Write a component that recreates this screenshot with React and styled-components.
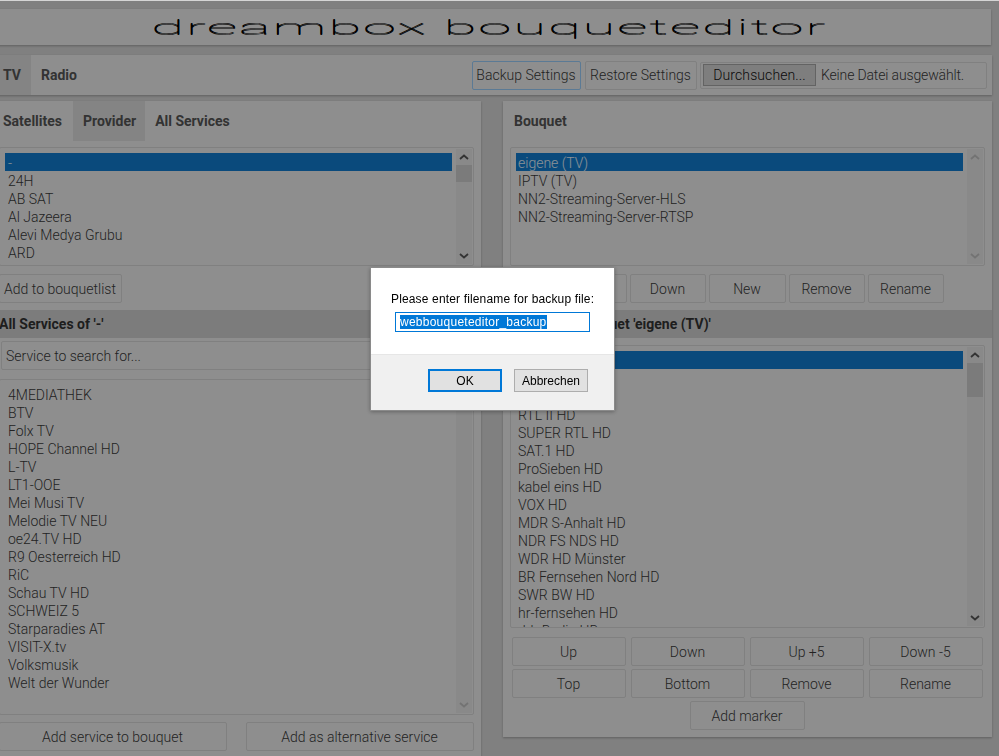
import React from "react";
import styled, { createGlobalStyle } from "styled-components";

const Global = createGlobalStyle`
  html, body { margin: 0; height: 756px; overflow: hidden; background: #d5d5d5; }
  * { box-sizing: border-box; }
  body { font-family: Roboto, "Liberation Sans", sans-serif; font-size: 14px; color: #3a3a3a; }
`;
const Page = styled.div`
  width: 1000px;
  margin-left: -8px;
  padding-top: 9px;
`;
const TitleBar = styled.header`
  height: 36px;
  width: 999px;
  background: #ededed;
  box-shadow: 0 1px 2px rgba(0,0,0,.25);
  display: flex;
  align-items: center;
  justify-content: center;
  overflow: hidden;
`;
const Title = styled.h1`
  margin: 0 0 0 -6px;
  font: 100 21px/1 Roboto, sans-serif;
  color: #000;
  white-space: nowrap;
  letter-spacing: .5px;
  text-shadow: 0 .7px 0 #000;
  transform: scale(2.89, 1);
`;
const Nav = styled.nav`
  margin-top: 10px;
  height: 40px;
  background: #ededed;
  box-shadow: 0 1px 2px rgba(0,0,0,.25);
  display: flex;
  align-items: stretch;
  padding-right: 5px;
`;
const Tab = styled.div`
  display: flex;
  align-items: center;
  padding: 0 ${p => p.$pr ?? 10}px 0 ${p => p.$pl ?? 10}px;
  font-weight: 700;
  color: #555;
  background: ${p => (p.$active ? "#dddddd" : "transparent")};
`;
const Actions = styled.div`
  margin-left: auto;
  display: flex;
  align-items: center;
  gap: 3px;
`;
const Btn = styled.button`
  height: ${p => p.$h || 29}px;
  width: ${p => (p.$w ? p.$w + "px" : "auto")};
  flex: ${p => (p.$grow ? "1" : "none")};
  margin-right: ${p => p.$mr || 0}px;
  padding: 0 1px 0 0;
  border: 1px solid ${p => (p.$focus ? "#98ccf8" : "#d6d6d6")};
  border-radius: 2px;
  background: #ededed;
  font: 300 14px Roboto, sans-serif;
  color: #3a3a3a;
`;
const FileBox = styled.div`
  width: 287px;
  height: 27px;
  border: 1px solid #d6d6d6;
  border-radius: 2px;
  display: flex;
  align-items: center;
  padding-left: 2px;
  gap: 5px;
  font-weight: 300;
  letter-spacing: -.15px;
  color: #3a3a3a;
`;
const FileBtn = styled.span`
  width: 113px;
  height: 22px;
  border: 1px solid #a6a6a6;
  background: #d2d2d2;
  display: flex;
  align-items: center;
  justify-content: center;
  color: #111;
  font-weight: 300;
  letter-spacing: .1px;
`;
const Columns = styled.main`
  margin-top: 6px;
  display: grid;
  grid-template-columns: 489px 489px;
  column-gap: 22px;
  align-items: start;
`;
const Panel = styled.section`
  background: #ededed;
  box-shadow: 0 1px 2px rgba(0,0,0,.25);
  padding-bottom: 7px;
`;
const PanelHead = styled.div`
  height: 40px;
  display: flex;
  align-items: stretch;
`;
const Heading = styled.div`
  padding: 0 11px;
  display: flex;
  align-items: center;
  font-weight: 700;
  color: #555;
`;
const ListBox = styled.div`
  margin: ${p => p.$mt}px 7px 0;
  height: ${p => p.$h}px;
  border: 1px solid #d6d6d6;
  border-radius: 2px;
  display: flex;
  background: #ededed;
`;
const Rows = styled.div`
  flex: 1;
  min-width: 0;
  padding: 5px 4px 0 5px;
  overflow: hidden;
  font-weight: 300;
  color: #3a3a3a;
`;
const Row = styled.div`
  height: 18px;
  line-height: 20px;
  padding-left: ${p => p.$inset}px;
  white-space: nowrap;
  background: ${p => (p.$sel ? "#127ccf" : "transparent")};
  color: ${p => (p.$sel ? "#e8f2fa" : "inherit")};
`;
const Track = styled.div`
  width: 16px;
  margin: 1px 1px 1px 0;
  background: #e4e4e4;
  display: flex;
  flex-direction: column;
  align-items: stretch;
`;
const Arrow = styled.div`
  height: 16px;
  display: flex;
  align-items: center;
  justify-content: center;
  color: ${p => (p.$faint ? "#c0c0c0" : "#555")};
`;
const Thumb = styled.div`
  height: ${p => p.$h}px;
  background: ${p => (p.$show ? "#cdcdcd" : "transparent")};
`;
const Gap = styled.div`flex: 1;`;
const BtnRow = styled.div`
  display: flex;
  justify-content: ${p => p.$justify || "flex-start"};
  gap: ${p => p.$gap || 0}px;
  margin: ${p => p.$mt || 0}px ${p => p.$side ?? 7}px 0;
`;
const SectionBar = styled.div`
  margin-top: 7px;
  height: 28px;
  padding: 0 7px;
  background: #cfcfcf;
  display: flex;
  align-items: center;
  font-weight: 700;
  color: #333;
  white-space: nowrap;
`;
const Search = styled.input`
  display: block;
  margin: 3px 6px 0 9px;
  width: 474px;
  height: 29px;
  border: 1px solid #d6d6d6;
  border-radius: 2px;
  background: #ededed;
  padding: 0 4px;
  font: 300 14px Roboto, sans-serif;
  &::placeholder { color: #3a3a3a; opacity: 1; }
`;
const Overlay = styled.div`
  position: fixed;
  inset: 1px 0 0 0;
  background: rgba(0,0,0,.4);
`;
const Dialog = styled.div`
  position: fixed;
  left: 370px;
  top: 267px;
  width: 245px;
  height: 144px;
  background: #fff;
  border: 1px solid #8a8a8a;
  box-shadow: 0 1px 4px rgba(0,0,0,.3);
  display: flex;
  flex-direction: column;
  font-family: "Liberation Sans", Arial, sans-serif;
  font-size: 12px;
  color: #000;
`;
const DialogBody = styled.div`
  height: 86px;
  padding: 24px 19px 0 24px;
`;
const Prompt = styled.div`
  white-space: nowrap;
  line-height: 14px;
  margin-left: -4px;
  letter-spacing: .15px;
`;
const PromptField = styled.div`
  margin-top: 6px;
  width: 195px;
  height: 20px;
  border: 1px solid #0078d7;
  padding: 2px 3px 2px 4px;
  line-height: 14px;
`;
const Selected = styled.span`
  background: #0078d7;
  color: #fff;
  display: inline-block;
  letter-spacing: .25px;
`;
const DialogFoot = styled.div`
  flex: 1;
  background: #f0f0f0;
  border-top: 1px solid #e6e6e6;
  display: flex;
  justify-content: flex-end;
  gap: 12px;
  padding: 14px 26px 0 0;
`;
const DialogBtn = styled.button`
  width: 74px;
  height: 23px;
  padding: 0;
  background: #e1e1e1;
  border: ${p => (p.$primary ? "2px solid #0078d7" : "1px solid #adadad")};
  font: 12px "Liberation Sans", Arial, sans-serif;
  color: #000;
`;

const Up = () => (
  <svg width="10" height="6" viewBox="0 0 10 6"><path d="M1 5 5 1.5 9 5" fill="none" stroke="currentColor" strokeWidth="1.8" /></svg>
);
const Down = () => (
  <svg width="10" height="6" viewBox="0 0 10 6"><path d="M1 1 5 4.5 9 1" fill="none" stroke="currentColor" strokeWidth="1.8" /></svg>
);
const Scroll = ({ thumb, faint }) => (
  <Track>
    <Arrow $faint={faint}><Up /></Arrow>
    <Thumb $h={thumb} $show={thumb > 0} />
    <Gap />
    <Arrow $faint={faint}><Down /></Arrow>
  </Track>
);
const List = ({ items, selected = 0, h, mt, thumb, faint, inset = 2 }) => (
  <ListBox $h={h} $mt={mt}>
    <Rows>
      {items.map((t, i) => <Row key={t} $sel={i === selected} $inset={inset}>{t}</Row>)}
    </Rows>
    <Scroll thumb={thumb} faint={faint} />
  </ListBox>
);

const providers = ["-", "24H", "AB SAT", "Al Jazeera", "Alevi Medya Grubu", "ARD"];
const services = ["4MEDIATHEK", "BTV", "Folx TV", "HOPE Channel HD", "L-TV", "LT1-OOE", "Mei Musi TV", "Melodie TV NEU", "oe24.TV HD", "R9 Oesterreich HD", "RiC", "Schau TV HD", "SCHWEIZ 5", "Starparadies AT", "VISIT-X.tv", "Volksmusik", "Welt der Wunder"];
const bouquets = ["eigene (TV)", "IPTV (TV)", "NN2-Streaming-Server-HLS", "NN2-Streaming-Server-RTSP"];
const channels = ["Das Erste HD", "ZDF HD", "RTL HD", "RTL II HD", "SUPER RTL HD", "SAT.1 HD", "ProSieben HD", "kabel eins HD", "VOX HD", "MDR S-Anhalt HD", "NDR FS NDS HD", "WDR HD Münster", "BR Fernsehen Nord HD", "SWR BW HD", "hr-fernsehen HD", "rbb Berlin HD"];

export default function App() {
  return (
    <>
      <Global />
      <Page>
        <TitleBar><Title>dreambox bouqueteditor</Title></TitleBar>
        <Nav>
          <Tab $active $pl={11}>TV</Tab>
          <Tab>Radio</Tab>
          <Actions>
            <Btn $w={109} $focus $mr={1}>Backup Settings</Btn>
            <Btn $w={112}>Restore Settings</Btn>
            <FileBox>
              <FileBtn>Durchsuchen...</FileBtn>
              Keine Datei ausgewählt.
            </FileBox>
          </Actions>
        </Nav>
        <Columns>
          <Panel>
            <PanelHead>
              <Tab $pl={11} $pr={11}>Satellites</Tab>
              <Tab $active $pr={9}>Provider</Tab>
              <Tab>All Services</Tab>
            </PanelHead>
            <List items={providers} h={119} mt={6} thumb={17} inset={3} />
            <BtnRow $mt={8}>
              <Btn $w={123}>Add to bouquetlist</Btn>
            </BtnRow>
            <SectionBar>All Services of '-'</SectionBar>
            <Search placeholder="Service to search for..." />
            <List items={services} selected={-1} h={336} mt={9} thumb={0} faint inset={3} />
            <BtnRow $mt={7} $gap={19}>
              <Btn $w={228}>Add service to bouquet</Btn>
              <Btn $w={228}>Add as alternative service</Btn>
            </BtnRow>
          </Panel>
          <Panel>
            <PanelHead><Heading>Bouquet</Heading></PanelHead>
            <List items={bouquets} h={119} mt={6} thumb={0} faint />
            <BtnRow $mt={8} $justify="center" $gap={3}>
              <Btn $w={76}>Up</Btn>
              <Btn $w={76}>Down</Btn>
              <Btn $w={77}>New</Btn>
              <Btn $w={76}>Remove</Btn>
              <Btn $w={76}>Rename</Btn>
            </BtnRow>
            <SectionBar>Service of Bouquet 'eigene (TV)'</SectionBar>
            <List items={channels} h={283} mt={7} thumb={34} />
            <BtnRow $mt={9} $side={9} $gap={5}>
              <Btn $grow>Up</Btn>
              <Btn $grow>Down</Btn>
              <Btn $grow>Up +5</Btn>
              <Btn $grow>Down -5</Btn>
            </BtnRow>
            <BtnRow $mt={3} $side={9} $gap={5}>
              <Btn $grow>Top</Btn>
              <Btn $grow>Bottom</Btn>
              <Btn $grow>Remove</Btn>
              <Btn $grow>Rename</Btn>
            </BtnRow>
            <BtnRow $mt={3} $justify="center">
              <Btn $w={115}>Add marker</Btn>
            </BtnRow>
          </Panel>
        </Columns>
      </Page>
      <Overlay />
      <Dialog>
        <DialogBody>
          <Prompt>Please enter filename for backup file:</Prompt>
          <PromptField><Selected>webbouqueteditor_backup</Selected></PromptField>
        </DialogBody>
        <DialogFoot>
          <DialogBtn $primary>OK</DialogBtn>
          <DialogBtn>Abbrechen</DialogBtn>
        </DialogFoot>
      </Dialog>
    </>
  );
}
